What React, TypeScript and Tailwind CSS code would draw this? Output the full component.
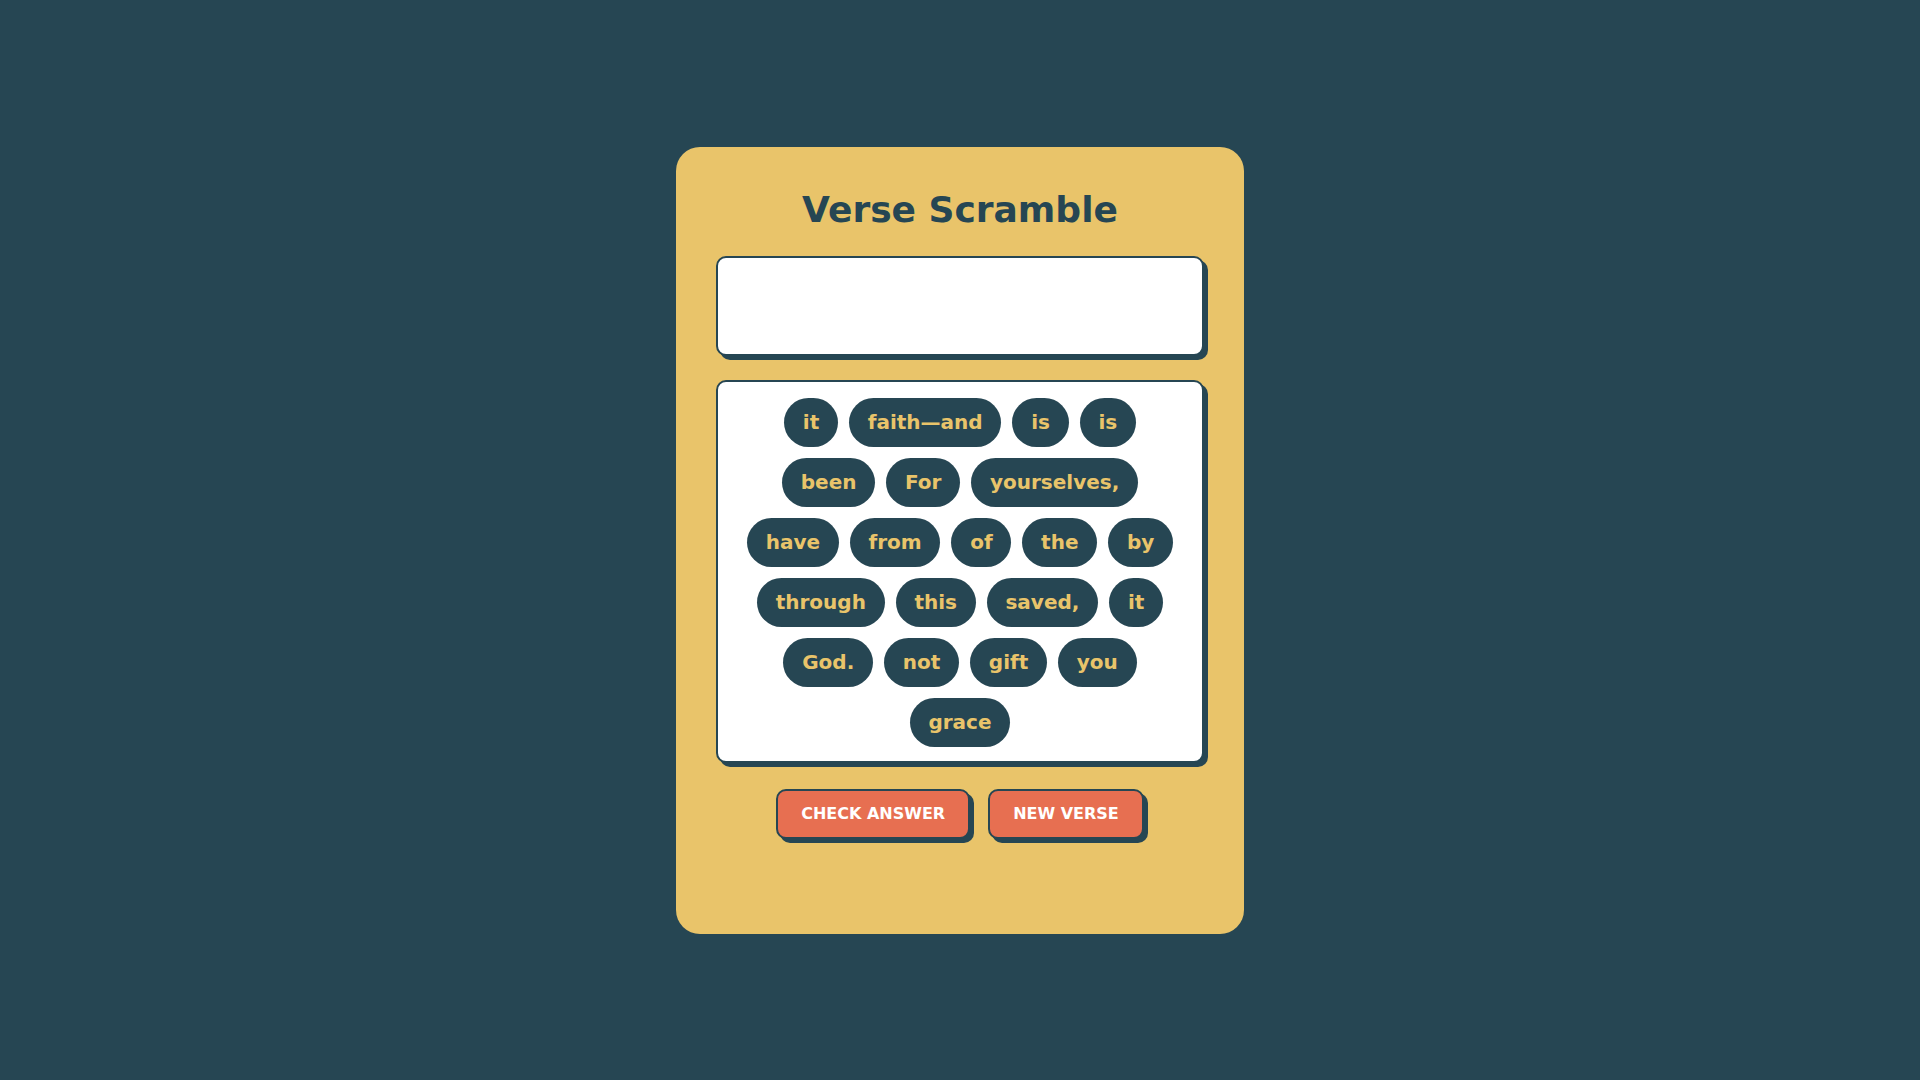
import React from "react";

const words = [
  "it", "faith—and", "is", "is",
  "been", "For", "yourselves,",
  "have", "from", "of", "the", "by",
  "through", "this", "saved,", "it",
  "God.", "not", "gift", "you",
  "grace",
];

export default function App() {
  return (
    <div
      className="min-h-screen w-full bg-[#264653] flex items-center justify-center"
      style={{ fontFamily: '"DejaVu Sans", "Liberation Sans", sans-serif' }}
    >
      <div className="w-[568px] h-[787px] rounded-[24px] bg-[#e9c46a] px-[40px] pt-[40px] pb-[40px] flex flex-col">
        <h1 className="text-center text-[36px] leading-[46px] font-bold text-[#264653] mb-[23px]">
          Verse Scramble
        </h1>
        <div className="h-[100px] bg-white border-2 border-[#264653] rounded-[10px] shadow-[4px_4px_0_#264653] mb-[24px]" />
        <div className="bg-white border-2 border-[#264653] rounded-[10px] shadow-[4px_4px_0_#264653] pt-[16px] pb-[14px] px-[20px] flex flex-wrap justify-center gap-[11px] mb-[26px]">
          {words.map((w, i) => (
            <button
              key={i}
              className="h-[49px] px-[18.75px] rounded-full bg-[#264653] text-[#e9c46a] text-[20px] font-bold leading-none flex items-center"
            >
              {w}
            </button>
          ))}
        </div>
        <div className="flex justify-center gap-[18px]">
          <button className="h-[50px] px-[23px] bg-[#e76f51] text-white text-[16px] font-bold border-2 border-[#264653] rounded-[10px] shadow-[4px_4px_0_#264653] leading-none pt-[1px]">
            CHECK ANSWER
          </button>
          <button className="h-[50px] px-[23px] bg-[#e76f51] text-white text-[16px] font-bold border-2 border-[#264653] rounded-[10px] shadow-[4px_4px_0_#264653] leading-none pt-[1px]">
            NEW VERSE
          </button>
        </div>
      </div>
    </div>
  );
}
